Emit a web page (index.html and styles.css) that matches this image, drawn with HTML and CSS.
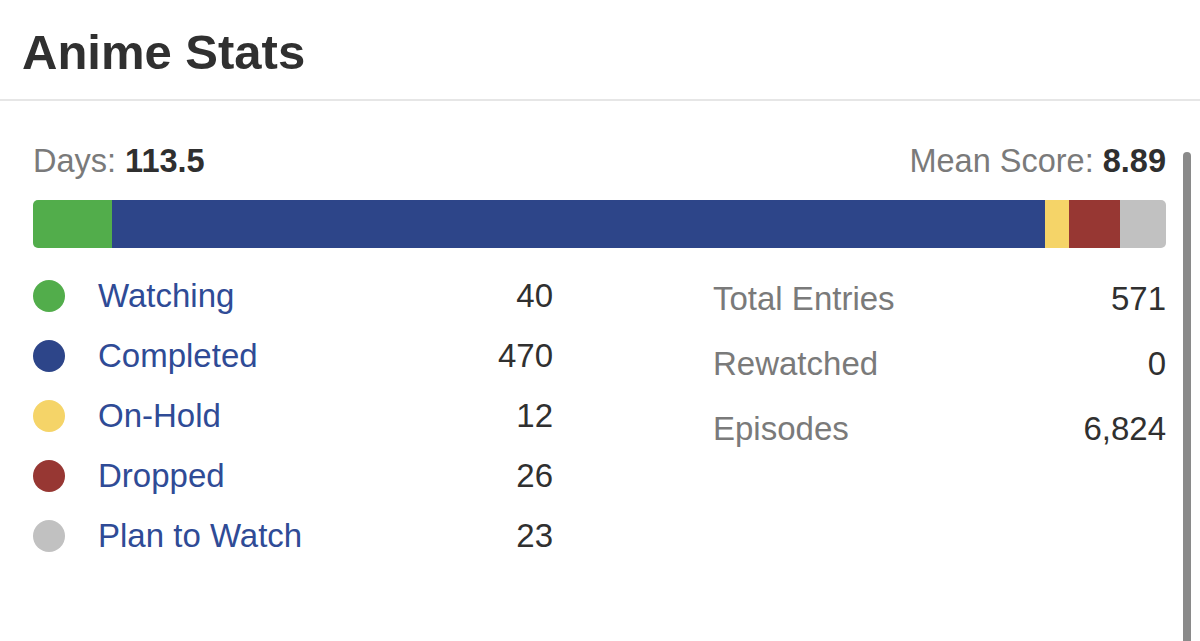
FILE: index.html
```html
<!DOCTYPE html>
<html lang="en">
<head>
    <meta charset="UTF-8">
    <meta name="viewport" content="width=device-width, initial-scale=1.0">
    <title>Anime Stats</title>
    <link rel="stylesheet" href="styles.css">
</head>
<body>
    <div class="card">
        <div class="card-head">
            <h1>Anime Stats</h1>
        </div>

        <div class="card-body">
            <div class="summary">
                <span>Days: <b>113.5</b></span>
                <span>Mean Score: <b>8.89</b></span>
            </div>

            <div class="bar">
                <span class="seg watching" style="width: 7.005%"></span>
                <span class="seg completed" style="width: 82.312%"></span>
                <span class="seg on-hold" style="width: 2.102%"></span>
                <span class="seg dropped" style="width: 4.553%"></span>
                <span class="seg plan" style="width: 4.028%"></span>
            </div>

            <div class="cols">
                <ul class="legend">
                    <li><span class="dot watching"></span><a href="#">Watching</a><span class="num">40</span></li>
                    <li><span class="dot completed"></span><a href="#">Completed</a><span class="num">470</span></li>
                    <li><span class="dot on-hold"></span><a href="#">On-Hold</a><span class="num">12</span></li>
                    <li><span class="dot dropped"></span><a href="#">Dropped</a><span class="num">26</span></li>
                    <li><span class="dot plan"></span><a href="#">Plan to Watch</a><span class="num">23</span></li>
                </ul>

                <ul class="totals">
                    <li><span class="label">Total Entries</span><span class="num">571</span></li>
                    <li><span class="label">Rewatched</span><span class="num">0</span></li>
                    <li><span class="label">Episodes</span><span class="num">6,824</span></li>
                </ul>
            </div>
        </div>

        <div class="scroll-thumb"></div>
    </div>
</body>
</html>
```

FILE: styles.css
```css
html, body {
    margin: 0;
    padding: 0;
    background: #fff;
}
body {
    font-family: "Liberation Sans", Arial, sans-serif;
    color: #323232;
    height: 641px;
    overflow: hidden;
}
.card {
    position: relative;
    height: 641px;
}
.card-head {
    height: 101px;
    padding-left: 22px;
    border-bottom: 2px solid #e6e6e6;
    box-sizing: border-box;
}
.card-head h1 {
    margin: 0;
    padding-top: 25px;
    font-size: 49px;
    line-height: 55px;
    font-weight: bold;
    color: #303030;
}
.card-body {
    padding: 42px 34px 0 33px;
}
.summary {
    display: flex;
    justify-content: space-between;
    font-size: 32.5px;
    line-height: 36px;
    color: #7a7a7a;
}
.summary b {
    color: #2f2f2f;
}
.bar {
    display: flex;
    height: 48px;
    margin-top: 21px;
    border-radius: 5px;
    overflow: hidden;
}
.seg {
    display: block;
    height: 100%;
}
.watching { background: #52ad4b; }
.completed { background: #2d4589; }
.on-hold { background: #f5d468; }
.dropped { background: #973733; }
.plan { background: #c1c1c1; }

.cols {
    display: grid;
    grid-template-columns: 520px 1fr;
    column-gap: 160px;
    margin-top: 18px;
}
.legend, .totals {
    list-style: none;
    margin: 0;
    padding: 0;
    font-size: 33px;
    line-height: 36px;
}
.legend li {
    display: flex;
    align-items: center;
    height: 60px;
}
.dot {
    width: 32px;
    height: 32px;
    border-radius: 50%;
    margin-right: 33px;
    flex-shrink: 0;
}
.legend a {
    color: #2f4b96;
    text-decoration: none;
}
.num {
    margin-left: auto;
    color: #303030;
}
.totals li {
    display: flex;
    align-items: center;
    height: 65px;
}
.totals .label {
    color: #7a7a7a;
}
.scroll-thumb {
    position: absolute;
    top: 152px;
    right: 9px;
    bottom: -10px;
    width: 8px;
    border-radius: 4px;
    background: #8a8a8a;
}
```
